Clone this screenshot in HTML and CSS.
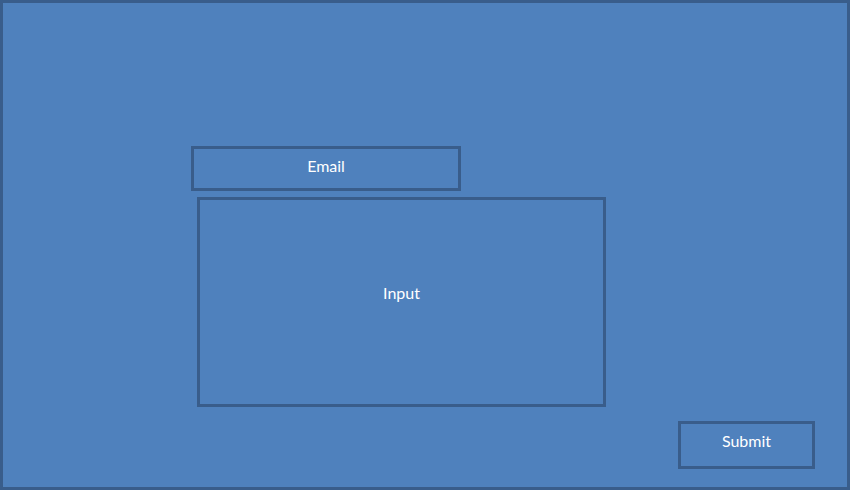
FILE: index.html
```html
<!DOCTYPE html>
<html>
<head>
<meta charset="utf-8">
<link rel="stylesheet" href="styles.css">
</head>
<body>
<div class="frame">
  <div class="box email">Email</div>
  <div class="box input">Input</div>
  <div class="row">
    <div class="box submit">Submit</div>
  </div>
</div>
</body>
</html>
```
FILE: styles.css
```css
html, body {
  margin: 0;
  padding: 0;
  background: #4f81bd;
}
.frame {
  box-sizing: border-box;
  width: 850px;
  height: 490px;
  border: 3px solid #395d8b;
  background: #4f81bd;
  display: flex;
  flex-direction: column;
  align-items: flex-start;
  font-family: Lato, "Open Sans", sans-serif;
  font-size: 16px;
  color: #ffffff;
}
.box {
  box-sizing: border-box;
  border: 3px solid #395d8b;
  display: flex;
  align-items: center;
  justify-content: center;
  line-height: 18px;
}
.email {
  width: 270px;
  height: 45px;
  margin-left: 188px;
  margin-top: 143px;
  padding-bottom: 6px;
}
.input {
  width: 409px;
  height: 210px;
  margin-left: 194px;
  margin-top: 6px;
  padding-bottom: 19px;
}
.row {
  align-self: stretch;
  display: flex;
  justify-content: flex-end;
  padding-right: 32px;
  margin-top: 14px;
}
.submit {
  width: 137px;
  height: 48px;
  padding-bottom: 9px;
}
```
